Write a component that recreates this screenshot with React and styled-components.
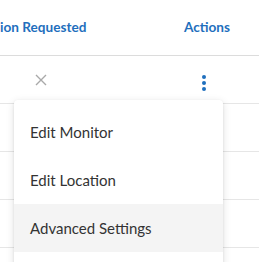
import React from 'react'
import styled, { createGlobalStyle } from 'styled-components'

const GlobalStyle = createGlobalStyle`
html, body {
    margin: 0;
    padding: 0;
    background: #fff;
    overflow: hidden;
}
body {
    font-family: Lato, "Open Sans", sans-serif;
}
`

const Table = styled.div`
position: relative;
width: 259px;
height: 262px;
overflow: hidden;
`
const Row = styled.div`
display: grid;
grid-template-columns: 88px 89px 60px 1fr;
align-items: center;
height: ${props => props.head ? '55px' : '47px'};
border-bottom: 1px solid ${props => props.head ? '#dcdcdc' : '#e6e6e6'};
`
const HeadCell = styled.div`
display: flex;
justify-content: ${props => props.start ? 'flex-start' : 'center'};
white-space: nowrap;
font-size: 13.6px;
font-weight: 700;
color: #1f6fbd;
padding-bottom: 2px;
`
const Cell = styled.div`
display: flex;
justify-content: center;
align-items: center;
padding-top: ${props => props.drop || 0}px;
padding-right: ${props => props.shift || 0}px;
`
const Kebab = styled.div`
display: flex;
flex-direction: column;
gap: 2px;
span {
    width: 4px;
    height: 4px;
    border-radius: 50%;
    background: #1f6fbd;
}
`
const Menu = styled.div`
position: absolute;
left: 14px;
top: 100px;
width: 209px;
padding-top: 8px;
background: #fff;
border-radius: 4px;
box-shadow: 0 2px 8px rgba(0,0,0,0.12), 0 1px 3px rgba(0,0,0,0.08);
`
const Item = styled.div`
display: flex;
align-items: center;
height: 48px;
padding-left: 16px;
font-size: 15px;
color: #333;
background: ${props => props.active ? '#f4f4f4' : 'transparent'};
`

const Close = () => (
    <svg width="12" height="12" viewBox="0 0 12 12">
        <path d="M1 1L11 11M11 1L1 11" stroke="#a9a9a9" strokeWidth="1.4" fill="none" />
    </svg>
)

const App = () => {
    const rows = [0, 1, 2, 3]
    return (
        <>
            <GlobalStyle />
            <Table>
                <Row head>
                    <HeadCell start>ion Requested</HeadCell>
                    <div />
                    <HeadCell>Actions</HeadCell>
                </Row>
                <Row>
                    <Cell shift={6}><Close /></Cell>
                    <div />
                    <Cell drop={6} shift={6}>
                        <Kebab><span /><span /><span /></Kebab>
                    </Cell>
                </Row>
                {rows.map(r => (
                    <Row key={r} />
                ))}
                <Menu>
                    <Item>Edit Monitor</Item>
                    <Item>Edit Location</Item>
                    <Item active>Advanced Settings</Item>
                    <Item />
                </Menu>
            </Table>
        </>
    )
}

export default App
